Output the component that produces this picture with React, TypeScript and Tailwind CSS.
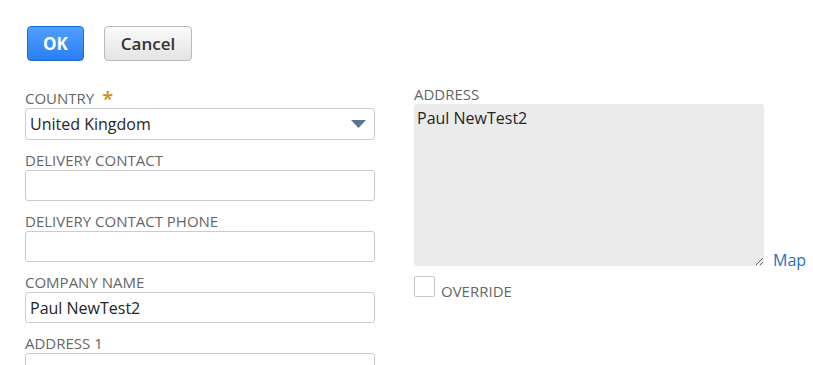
import React from "react";

const labelCls =
  "block h-5 text-[15px] leading-5 uppercase text-[#666666] whitespace-nowrap";
const inputCls =
  "block w-[350px] h-[31px] rounded-[3px] border border-[#cccccc] bg-white px-[4px] text-[16px] text-[#262626] outline-none";

function Field({ label, value = "" }: { label: string; value?: string }) {
  return (
    <div className="flex flex-col">
      <label className={labelCls}>{label}</label>
      <input className={inputCls} readOnly value={value} />
    </div>
  );
}

export default function App() {
  return (
    <div
      className="w-[813px] h-[365px] overflow-hidden bg-white pt-[26px] pl-[25px]"
      style={{ fontFamily: '"Open Sans", "Liberation Sans", sans-serif' }}
    >
      <div className="flex gap-[20px] pl-[2px]">
        <button className="h-[35px] w-[57px] rounded-[4px] border border-[#1c6ad6] bg-gradient-to-b from-[#4f9eff] to-[#2a7ff2] text-[17px] font-bold text-white">
          OK
        </button>
        <button className="h-[35px] w-[88px] rounded-[4px] border border-[#b9b9b9] bg-gradient-to-b from-[#fbfbfb] to-[#e4e4e4] text-[17px] font-semibold text-[#333333]">
          Cancel
        </button>
      </div>

      <div className="mt-[23px] flex gap-[39px]">
        {/* left column */}
        <div className="flex w-[350px] flex-col gap-[10px] pt-[4px]">
          <div className="flex flex-col">
            <label className={labelCls}>
              Country
              <span className="ml-[8px] align-[-2px] text-[20px] font-semibold leading-none text-[#d4890a]">
                *
              </span>
            </label>
            <div className="relative h-[32px] w-[350px] rounded-[3px] border border-[#cccccc] bg-white">
              <span className="absolute left-[4px] top-1/2 -translate-y-1/2 text-[16px] text-[#262626]">
                United Kingdom
              </span>
              <svg
                className="absolute right-[8px] top-[11px]"
                width="15"
                height="8"
                viewBox="0 0 15 8"
              >
                <path d="M0 0 L15 0 L7.5 8 Z" fill="#5a7390" />
              </svg>
            </div>
          </div>
          <Field label="Delivery Contact" />
          <Field label="Delivery Contact Phone" />
          <Field label="Company Name" value="Paul NewTest2" />
          <Field label="Address 1" />
        </div>

        {/* right column */}
        <div className="flex flex-col">
          <label className={labelCls}>Address</label>
          <div className="flex items-end gap-[9px]">
            <textarea
              readOnly
              value="Paul NewTest2"
              className="block h-[162px] w-[350px] resize rounded-[3px] border-0 bg-[#ebebeb] px-[3px] pt-[4px] text-[16px] leading-5 text-[#262626] outline-none"
            />
            <a className="mb-[-4px] text-[16px] leading-5 text-[#2470c4]" href="#">
              Map
            </a>
          </div>
          <div className="mt-[10px] flex items-start gap-[6px]">
            <span className="block h-[21px] w-[21px] rounded-[2px] border border-[#c8c8c8] bg-white" />
            <span className="mt-[5px] text-[15px] leading-5 uppercase text-[#666666]">
              Override
            </span>
          </div>
        </div>
      </div>
    </div>
  );
}
